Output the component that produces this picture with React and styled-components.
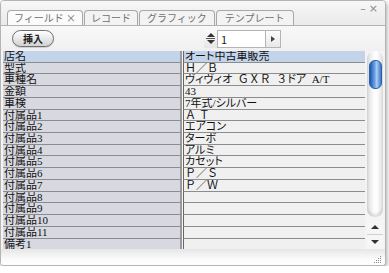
import styled, { createGlobalStyle } from "styled-components"

const Global = createGlobalStyle`
body {
  margin: 0;
  background: #ffffff;
  font-family: "Liberation Serif", "Noto Sans CJK JP", serif;
}
`

const Window = styled.div`
width: 384px;
height: 264px;
border: 1px solid #b4b4b4;
border-radius: 4px;
background: #f2f2f2;
box-shadow: 1px 2px 4px rgba(0, 0, 0, 0.35);
display: flex;
flex-direction: column;
overflow: hidden;
`

const TabBar = styled.div`
height: 24px;
flex: none;
display: flex;
align-items: flex-end;
padding-left: 6px;
border-bottom: 1px solid #b2b2b2;
background: linear-gradient(#f7f7f7, #eaeaea);
`

const Tab = styled.div`
height: 14px;
padding: 0 ${props => props.pad || 6}px;
margin-right: 1px;
border: 1px solid #a8a8a8;
border-bottom: none;
border-radius: 4px 4px 0 0;
background: ${props => props.active ? "#fbfbfb" : "#f3f3f3"};
color: #707070;
font-family: "Noto Sans CJK JP", sans-serif;
font-size: 10px;
line-height: 14px;
white-space: nowrap;
`

const Controls = styled.div`
align-self: flex-start;
margin-left: auto;
margin-right: 4px;
margin-top: 1px;
color: #8a8a8a;
font-family: "DejaVu Sans", sans-serif;
font-size: 11px;
letter-spacing: 3px;
`

const Toolbar = styled.div`
height: 25px;
flex: none;
display: flex;
align-items: center;
padding-left: 11px;
background: linear-gradient(#f8f8f8, #f0f0f0);
`

const PillButton = styled.div`
width: 40px;
height: 15px;
border: 1px solid #6e6e6e;
border-radius: 9px;
background: linear-gradient(#ffffff, #e4e4e4 60%, #d2d2d2);
box-shadow: 0 1px 1px rgba(0, 0, 0, 0.15);
display: flex;
align-items: center;
justify-content: center;
font-family: "Noto Sans CJK JP", sans-serif;
font-weight: bold;
font-size: 10px;
color: #222;
`

const Stepper = styled.div`
margin-left: 150px;
display: flex;
height: 18px;
`

const Spin = styled.div`
width: 13px;
display: flex;
flex-direction: column;
align-items: center;
justify-content: center;
gap: 1px;
background: linear-gradient(#fafafa, #e6e6e6);
`

const Bar = styled.div`
width: 9px;
height: 1px;
background: #555;
`

const Tri = styled.div`
width: 0;
height: 0;
border-left: 4px solid transparent;
border-right: 4px solid transparent;
border-${props => props.down ? "top" : "bottom"}: 4px solid #333;
`

const Field = styled.div`
width: 44px;
border: 1px solid #b4b4b4;
background: #fff;
font-family: "Noto Sans CJK JP", sans-serif;
font-size: 11px;
line-height: 16px;
padding-left: 3px;
color: #222;
`

const NextBtn = styled.div`
width: 14px;
border: 1px solid #b4b4b4;
border-left: none;
background: linear-gradient(#fcfcfc, #e8e8e8);
display: flex;
align-items: center;
justify-content: center;
`

const RightTri = styled.div`
width: 0;
height: 0;
border-top: 3px solid transparent;
border-bottom: 3px solid transparent;
border-left: 4px solid #444;
`

const Body = styled.div`
flex: 1;
display: flex;
min-height: 0;
overflow: hidden;
background: #f4f4f4;
padding-left: 2px;
`

const Table = styled.div`
width: 362px;
display: grid;
grid-template-columns: 179px 1fr;
grid-auto-rows: 11.73px;
overflow: hidden;
align-content: start;
`

const Cell = styled.div`
border-bottom: 1px solid #8c8c8c;
font-size: 11px;
line-height: 11px;
padding-left: 1px;
color: #111;
white-space: pre;
overflow: hidden;
`

const Label = styled(Cell)`
background: ${props => props.selected ? "#c3d3ea" : "#d8d8e0"};
border-right: 2px solid #9a9a9a;
`

const Value = styled(Cell)`
background: ${props => props.selected ? "#c3d3ea" : "#f0f0f0"};
border-left: 1px solid #666;
margin-left: 1px;
`

const Kana = styled.span`
font-feature-settings: "palt";
`

const Scroll = styled.div`
width: 16px;
margin-left: 2px;
display: flex;
flex-direction: column;
`

const Track = styled.div`
flex: 1;
border-radius: 8px;
background: linear-gradient(90deg, #dcdcdc, #fafafa 40%, #ffffff 60%, #e0e0e0);
box-shadow: inset 0 -3px 3px rgba(0, 0, 0, 0.12);
padding-top: 9px;
margin-bottom: 3px;
display: flex;
justify-content: center;
`

const Thumb = styled.div`
width: 11px;
height: 27px;
border-radius: 6px;
border: 1px solid #2a5fa8;
background: linear-gradient(90deg, #1d57b0, #6fa4e6 45%, #a9cdf4 60%, #3c78cc);
`

const ArrowBtn = styled.div`
height: 14px;
display: flex;
align-items: center;
justify-content: center;
background: #f6f6f6;
border-top: ${props => props.down ? "1px solid #d0d0d0" : "none"};
`

const Footer = styled.div`
height: 15px;
flex: none;
background: linear-gradient(#e6e6e6, #fafafa 60%, #ffffff);
display: flex;
justify-content: flex-end;
align-items: flex-end;
padding: 0 3px 1px 0;
`

const Grip = styled.svg`
display: block;
`

const rows = [
  ["店名", <Kana>オート中古車販売</Kana>],
  ["型式", "Ｈ／Ｂ"],
  ["車種名", <><Kana>ヴィヴィオ</Kana>  ＧＸＲ  ３<Kana>ドア</Kana>  A/T</>],
  ["金額", "43"],
  ["車検", <Kana>7年式/シルバー</Kana>],
  ["付属品1", "Ａ Ｔ"],
  ["付属品2", <Kana>エアコン</Kana>],
  ["付属品3", <Kana>ターボ</Kana>],
  ["付属品4", <Kana>アルミ</Kana>],
  ["付属品5", <Kana>カセット</Kana>],
  ["付属品6", "Ｐ／Ｓ"],
  ["付属品7", "Ｐ／Ｗ"],
  ["付属品8", ""],
  ["付属品9", ""],
  ["付属品10", ""],
  ["付属品11", ""],
  ["備考1", ""],
]

const App = () => {
  return (
    <>
      <Global />
      <Window>
        <TabBar>
          <Tab active>フィールド ×</Tab>
          <Tab>レコード</Tab>
          <Tab pad={7}>グラフィック</Tab>
          <Tab pad={8}>テンプレート</Tab>
          <Controls>–×</Controls>
        </TabBar>
        <Toolbar>
          <PillButton>挿入</PillButton>
          <Stepper>
            <Spin>
              <Tri />
              <Bar />
              <Tri down />
            </Spin>
            <Field>1</Field>
            <NextBtn>
              <RightTri />
            </NextBtn>
          </Stepper>
        </Toolbar>
        <Body>
          <Table>
            {rows.map(([k, v], i) => [
              <Label key={"l" + i} selected={i === 0}>{k}</Label>,
              <Value key={"v" + i} selected={i === 0}>{v}</Value>,
            ])}
          </Table>
          <Scroll>
            <Track>
              <Thumb />
            </Track>
            <ArrowBtn>
              <Tri />
            </ArrowBtn>
            <ArrowBtn down>
              <Tri down />
            </ArrowBtn>
          </Scroll>
        </Body>
        <Footer>
          <Grip width="10" height="10" viewBox="0 0 10 10">
            {[[8, 2], [6, 4], [8, 4], [4, 6], [6, 6], [8, 6], [2, 8], [4, 8], [6, 8], [8, 8]].map(([x, y]) => (
              <rect key={x + "-" + y} x={x} y={y} width="1" height="1" fill="#8a8a8a" />
            ))}
          </Grip>
        </Footer>
      </Window>
    </>
  )
}

export default App
